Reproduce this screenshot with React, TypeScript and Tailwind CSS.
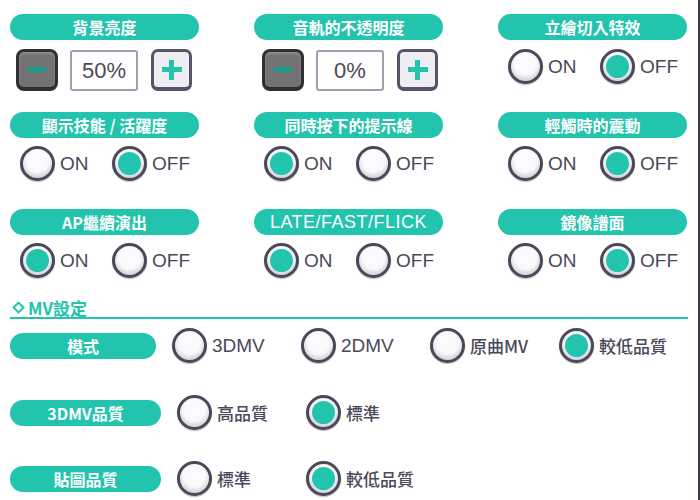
import React from "react";

const font = { fontFamily: '"Liberation Sans", "Noto Sans CJK TC", sans-serif' };
const cjk = { fontFamily: '"Noto Sans CJK TC", "Liberation Sans", sans-serif' };

function Pill({ children, className = "", latin }: { children: React.ReactNode; className?: string; latin?: boolean }) {
  return (
    <div
      className={`h-[26px] rounded-full bg-[#22c4ad] text-white font-bold text-[16px] leading-none flex items-center justify-center ${className}`}
      style={latin ? font : cjk}
    >
      {children}
    </div>
  );
}

function Radio({ on, label, w, cjkLabel }: { on: boolean; label: string; w?: string; cjkLabel?: boolean }) {
  return (
    <div className={`flex items-center gap-[5px] ${w ?? ""}`}>
      <div className="w-[35px] h-[35px] shrink-0 rounded-full border-[3px] border-[#4b4859] bg-[#fbfbfd] shadow-[inset_0_-3px_4px_rgba(80,78,100,0.25),0_1px_1px_rgba(0,0,0,0.25)] flex items-center justify-center">
        {on && <div className="w-[23px] h-[23px] rounded-full bg-[#22c4ad]" />}
      </div>
      <span
        className={`text-[#4b4859] ${cjkLabel ? "text-[17px] font-medium" : "text-[19px]"} leading-none`}
        style={cjkLabel ? cjk : font}
      >
        {label}
      </span>
    </div>
  );
}

function OnOff({ on }: { on: boolean }) {
  return (
    <div className="flex pl-[10px]">
      <Radio on={on} label="ON" w="w-[92px]" />
      <Radio on={!on} label="OFF" />
    </div>
  );
}

function Stepper({ value, pl }: { value: string; pl: string }) {
  return (
    <div className={`flex items-center ${pl}`}>
      <div className="w-[42px] h-[42px] rounded-[8px] border-[3px] border-[#2f2f36] border-b-[4px] bg-[#737373] shadow-[inset_0_2px_2px_rgba(255,255,255,0.2)] flex items-center justify-center">
        <div className="w-[18px] h-[5px] rounded-[1px] bg-[#1b9a88]" />
      </div>
      <div
        className="ml-[12px] w-[68px] h-[41px] border-2 border-[#a09eae] rounded-[3px] flex items-center justify-center text-[22px] text-[#4b4859]"
        style={font}
      >
        {value}
      </div>
      <div className="ml-[13px] w-[41px] h-[42px] rounded-[7px] border-[3px] border-[#55546a] border-b-[4px] bg-[#eeeef2] flex items-center justify-center relative">
        <div className="absolute w-[20px] h-[5px] bg-[#22c4ad]" />
        <div className="absolute w-[5px] h-[20px] bg-[#22c4ad]" />
      </div>
    </div>
  );
}

function Cell({ title, children, titleClass = "", latin }: { title: string; children: React.ReactNode; titleClass?: string; latin?: boolean }) {
  return (
    <div className="w-[189px] flex flex-col">
      <Pill className={titleClass} latin={latin}>{title}</Pill>
      {children}
    </div>
  );
}

function MvRow({ title, options, selected, className = "" }: { title: string; options: string[]; selected: number; className?: string }) {
  return (
    <div className={`flex items-center h-[35px] ${className}`}>
      <Pill className="w-[151px]">{title}</Pill>
      <div className="flex ml-[16px]">
        {options.map((o, i) => (
          <Radio key={o} on={i === selected} label={o} w="w-[129px]" cjkLabel={/[^\x00-\x7F]/.test(o)} />
        ))}
      </div>
    </div>
  );
}

export default function App() {
  return (
    <div className="w-[700px] h-[500px] bg-white overflow-hidden border-r-2 border-[#3a3a40] relative" style={font}>
      <div className="px-[10px] pt-[14px]">
        {/* Row 1 */}
        <div className="flex gap-[55px]">
          <Cell title="背景亮度">
            <div className="mt-[9px]">
              <Stepper value="50%" pl="pl-[6px]" />
            </div>
          </Cell>
          <Cell title="音軌的不透明度">
            <div className="mt-[9px]">
              <Stepper value="0%" pl="pl-[8px]" />
            </div>
          </Cell>
          <Cell title="立繪切入特效">
            <div className="mt-[9px]">
              <OnOff on={false} />
            </div>
          </Cell>
        </div>
        {/* Row 2 */}
        <div className="flex gap-[55px] mt-[21px]">
          <Cell title="顯示技能 / 活躍度">
            <div className="mt-[8px]">
              <OnOff on={false} />
            </div>
          </Cell>
          <Cell title="同時按下的提示線">
            <div className="mt-[8px]">
              <OnOff on={true} />
            </div>
          </Cell>
          <Cell title="輕觸時的震動">
            <div className="mt-[8px]">
              <OnOff on={false} />
            </div>
          </Cell>
        </div>
        {/* Row 3 */}
        <div className="flex gap-[55px] mt-[28px]">
          <Cell title="AP繼續演出">
            <div className="mt-[8px]">
              <OnOff on={true} />
            </div>
          </Cell>
          <Cell title="LATE/FAST/FLICK" titleClass="text-[18px] font-normal tracking-[0.5px]" latin>
            <div className="mt-[8px]">
              <OnOff on={true} />
            </div>
          </Cell>
          <Cell title="鏡像譜面">
            <div className="mt-[8px]">
              <OnOff on={false} />
            </div>
          </Cell>
        </div>

        {/* MV section */}
        <div className="mt-[20px] w-[678px] border-b-2 border-[#22c4ad] h-[21px] flex items-center pl-[2px] gap-[5px] text-[#22c4ad] font-bold text-[17px] leading-none" style={cjk}>
          <span className="inline-block w-[9px] h-[9px] rotate-45 border-[2.5px] border-[#22c4ad] ml-[2px]" />
          <span>MV設定</span>
        </div>

        <MvRow className="mt-[9px]" title="模式" options={["3DMV", "2DMV", "原曲MV", "較低品質"]} selected={3} />
        <MvRow className="mt-[32px]" title="3DMV品質" options={["高品質", "標準"]} selected={1} />
        <MvRow className="mt-[31px]" title="貼圖品質" options={["標準", "較低品質"]} selected={1} />
      </div>
    </div>
  );
}
